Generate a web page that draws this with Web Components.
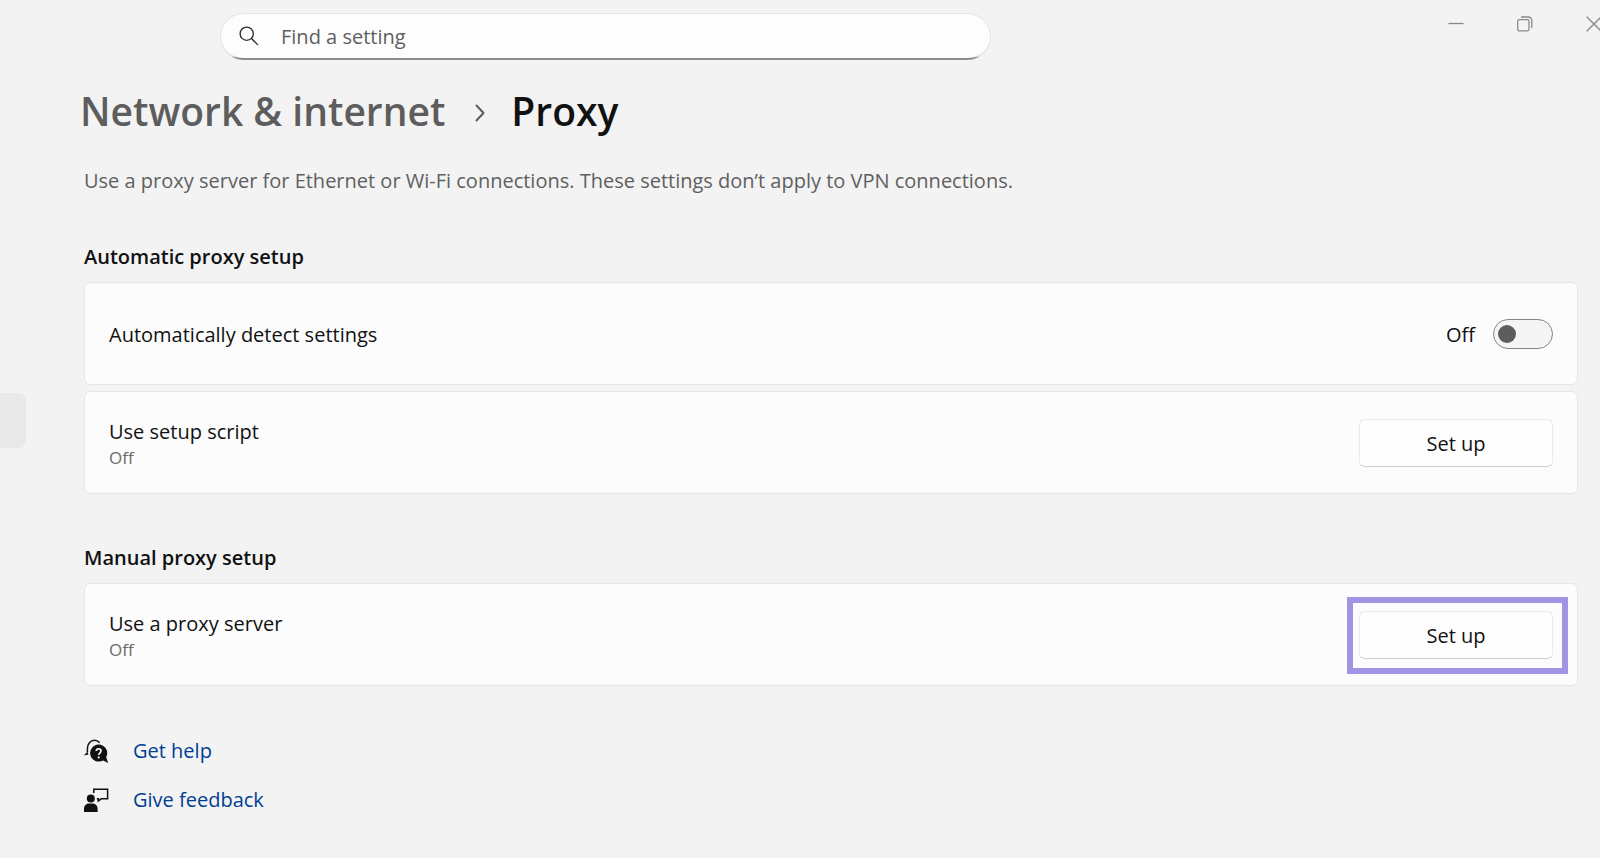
<!DOCTYPE html>
<html lang="en">
<head>
<meta charset="UTF-8">
<meta name="viewport" content="width=device-width, initial-scale=1.0">
<title>Settings - Proxy</title>
<style>
    body {
        margin: 0;
        background: #f3f3f3;
        color: #111;
        font-family: 'Segoe UI', 'Open Sans', 'Noto Sans', sans-serif;
        font-size: 20px;
        line-height: 28px;
    }
</style>
</head>
<body>
<settings-window>
    <setting-search slot="search" placeholder="Find a setting"></setting-search>
    <window-controls slot="controls"></window-controls>
    <nav-strip slot="nav"></nav-strip>

    <page-title parent="Network &amp; internet" current="Proxy"></page-title>
    <page-note>Use a proxy server for Ethernet or Wi-Fi connections. These settings don’t apply to VPN connections.</page-note>

    <setting-group heading="Automatic proxy setup">
        <setting-card label="Automatically detect settings">
            <toggle-switch label="Automatically detect settings"></toggle-switch>
        </setting-card>
        <setting-card label="Use setup script" status="Off">
            <action-button>Set up</action-button>
        </setting-card>
    </setting-group>

    <setting-group heading="Manual proxy setup">
        <setting-card label="Use a proxy server" status="Off">
            <action-button highlight>Set up</action-button>
        </setting-card>
    </setting-group>

    <help-links>
        <help-link icon="help">Get help</help-link>
        <help-link icon="feedback">Give feedback</help-link>
    </help-links>
</settings-window>

<script>
// Base class: attaches an open shadow root and fills it from render()
class BaseElement extends HTMLElement {
    constructor() {
        super();
        this.attachShadow({ mode: 'open' }).innerHTML = this.render();
    }
}

// Window frame: title bar, cut-off navigation and page content
class SettingsWindow extends BaseElement {
    render() {
        return `
            <style>
                :host {
                    display: block;
                    min-height: 100vh;
                    overflow: hidden;
                }
                header {
                    display: flex;
                    justify-content: space-between;
                    align-items: flex-start;
                    height: 60px;
                    padding-left: 220px;
                }
                .body {
                    display: flex;
                }
                main {
                    flex: 1;
                    min-width: 0;
                    padding: 21px 22px 32px 58px;
                }
            </style>
            <header>
                <slot name="search"></slot>
                <slot name="controls"></slot>
            </header>
            <div class="body">
                <slot name="nav"></slot>
                <main><slot></slot></main>
            </div>
        `;
    }
}

// Search box
class SettingSearch extends BaseElement {
    render() {
        const placeholder = this.getAttribute('placeholder') || '';
        return `
            <style>
                :host {
                    display: block;
                    flex: 0 1 771px;
                    margin-top: 13px;
                }
                label {
                    display: flex;
                    align-items: center;
                    box-sizing: border-box;
                    height: 47px;
                    padding: 0 18px;
                    gap: 22px;
                    border: 1px solid transparent;
                    border-bottom-width: 2px;
                    border-radius: 24px;
                    background:
                        linear-gradient(#fdfdfd, #fdfdfd) padding-box,
                        linear-gradient(to top, #8c8c8c 2px, #e5e5e5 4px) border-box;
                }
                svg {
                    flex-shrink: 0;
                }
                input {
                    flex: 1;
                    min-width: 0;
                    padding: 2px 0 0;
                    border: none;
                    outline: none;
                    background: none;
                    font: inherit;
                    color: inherit;
                }
                input::placeholder {
                    color: #606060;
                    opacity: 1;
                }
            </style>
            <label>
                <svg width="20" height="20" viewBox="0 0 20 20" fill="none" stroke="#2b2b2b" stroke-width="1.3" stroke-linecap="round"><circle cx="7.7" cy="7.7" r="6.6"/><path d="M12.5 12.5L18.6 18.6"/></svg>
                <input type="text" aria-label="${placeholder}" placeholder="${placeholder}">
            </label>
        `;
    }
}

// Minimize, restore, close
class WindowControls extends BaseElement {
    render() {
        return `
            <style>
                :host {
                    display: flex;
                    margin-right: -28px;
                }
                button {
                    display: flex;
                    justify-content: center;
                    align-items: center;
                    width: 69px;
                    height: 48px;
                    padding: 0;
                    border: none;
                    background: none;
                    color: #8a8a8a;
                }
            </style>
            <button aria-label="Minimize"><svg width="16" height="16" viewBox="0 0 16 16" fill="none" stroke="currentColor" stroke-width="1.3"><path d="M.5 7.5h15"/></svg></button>
            <button aria-label="Restore"><svg width="16" height="16" viewBox="0 0 16 16" fill="none" stroke="currentColor" stroke-width="1.3"><rect x=".7" y="3.6" width="11.3" height="11.3" rx="1.6"/><path d="M4 1h7.200a3.600 3.600 0 0 1 3.600 3.600v7.400"/></svg></button>
            <button aria-label="Close"><svg width="16" height="16" viewBox="0 0 16 16" fill="none" stroke="currentColor" stroke-width="1.3"><path d="M.7.7l14.600 14.600M15.300.7L.7 15.300"/></svg></button>
        `;
    }
}

// Right edge of the navigation pane with the selected entry
class NavStrip extends BaseElement {
    render() {
        return `
            <style>
                :host {
                    display: block;
                    flex: 0 0 26px;
                    padding-top: 333px;
                }
                div {
                    height: 55px;
                    background: #e9e9e9;
                    border-radius: 0 7px 7px 0;
                }
            </style>
            <div></div>
        `;
    }
}

// Breadcrumb title
class PageTitle extends BaseElement {
    render() {
        return `
            <style>
                :host {
                    display: block;
                    margin-left: -4px;
                }
                h1 {
                    display: flex;
                    align-items: center;
                    gap: 26px;
                    margin: 0;
                    font-size: 39px;
                    font-weight: 600;
                    line-height: 60px;
                }
                a {
                    color: #5d5d5d;
                    text-decoration: none;
                }
                svg {
                    margin: 4px 0 0 4px;
                }
            </style>
            <h1>
                <a href="#">${this.getAttribute('parent').replace('&', '&amp;')}</a>
                <svg width="10" height="18" viewBox="0 0 10 18" fill="none" stroke="#5d5d5d" stroke-width="2" stroke-linecap="round" stroke-linejoin="round"><path d="M1.5 1.5L8.5 9L1.5 16.5"/></svg>
                <span>${this.getAttribute('current')}</span>
            </h1>
        `;
    }
}

// Description under the title
class PageNote extends BaseElement {
    render() {
        return `
            <style>
                :host {
                    display: block;
                    margin: 26px 0 48px;
                    color: #606060;
                }
            </style>
            <slot></slot>
        `;
    }
}

// Heading with a stack of cards
class SettingGroup extends BaseElement {
    render() {
        return `
            <style>
                :host {
                    display: block;
                    margin-bottom: 50px;
                }
                h2 {
                    margin: 0 0 11px;
                    font-size: 20px;
                    font-weight: 600;
                    line-height: 28px;
                }
                .cards {
                    display: flex;
                    flex-direction: column;
                    gap: 6px;
                }
            </style>
            <section>
                <h2>${this.getAttribute('heading')}</h2>
                <div class="cards"><slot></slot></div>
            </section>
        `;
    }
}

// One row: label and status on the left, control on the right
class SettingCard extends BaseElement {
    render() {
        const status = this.getAttribute('status');
        return `
            <style>
                :host {
                    display: flex;
                    justify-content: space-between;
                    align-items: center;
                    box-sizing: border-box;
                    min-height: 103px;
                    padding: 0 24px;
                    background: #fcfcfc;
                    border: 1px solid #e6e6e6;
                    border-radius: 6px;
                }
                .text {
                    padding-top: 3px;
                }
                .status {
                    font-size: 17px;
                    line-height: 24px;
                    color: #6b6b6b;
                }
            </style>
            <div class="text">
                <div>${this.getAttribute('label')}</div>
                ${status ? `<div class="status">${status}</div>` : ''}
            </div>
            <slot></slot>
        `;
    }
}

// On/off switch
class ToggleSwitch extends BaseElement {
    constructor() {
        super();
        const input = this.shadowRoot.querySelector('input');
        const state = this.shadowRoot.querySelector('span');
        input.addEventListener('change', () => {
            state.textContent = input.checked ? 'On' : 'Off';
        });
    }

    render() {
        return `
            <style>
                label {
                    display: flex;
                    align-items: center;
                    gap: 18px;
                }
                span {
                    padding-top: 3px;
                }
                input {
                    appearance: none;
                    display: flex;
                    align-items: center;
                    box-sizing: border-box;
                    width: 60px;
                    height: 30px;
                    margin: 0;
                    padding: 0 4px;
                    background: #f5f5f5;
                    border: 1px solid #858585;
                    border-radius: 15px;
                }
                input::before {
                    content: '';
                    width: 18px;
                    height: 18px;
                    border-radius: 50%;
                    background: #5d5d5d;
                }
                input:checked {
                    justify-content: flex-end;
                    background: #005fb8;
                    border-color: #005fb8;
                }
                input:checked::before {
                    background: #fff;
                }
            </style>
            <label>
                <span>Off</span>
                <input type="checkbox" role="switch" aria-label="${this.getAttribute('label')}">
            </label>
        `;
    }
}

// Standard button, with an optional frame around it
class ActionButton extends BaseElement {
    render() {
        return `
            <style>
                :host {
                    display: block;
                    position: relative;
                }
                button {
                    display: block;
                    box-sizing: border-box;
                    width: 194px;
                    height: 48px;
                    padding: 2px 0 0;
                    background: #fefefe;
                    border: 1px solid #e9e9e9;
                    border-bottom-color: #d0d0d0;
                    border-radius: 6px;
                    font: inherit;
                    color: inherit;
                }
                :host([highlight])::after {
                    content: '';
                    position: absolute;
                    inset: -14px -15px -15px -12px;
                    border: 6px solid #a294e4;
                    pointer-events: none;
                }
            </style>
            <button><slot></slot></button>
        `;
    }
}

// Links at the bottom of the page
class HelpLinks extends BaseElement {
    render() {
        return `
            <style>
                :host {
                    display: flex;
                    flex-direction: column;
                    align-items: flex-start;
                    gap: 21px;
                    margin-top: 51px;
                }
            </style>
            <slot></slot>
        `;
    }
}

const icons = {
    help: `<path d="M3.400 13V9.800C3.400 4.800 6.400 1.300 10.400 1.300C12.600 1.300 14.400 2.200 15.600 3.800" fill="none" stroke="#111" stroke-width="1.500"/>
        <path d="M3.400 12.500L0 16.400L4.400 15.600z" fill="#111"/>
        <path d="M14.600 5.600a8.500 8.500 0 1 0 4.400 15.800L24.200 24L22.200 18.200A8.500 8.500 0 0 0 14.600 5.600z" fill="#111"/>
        <path d="M12.200 12C12.400 9 17 9.200 17 11.900C17 13.800 14.700 13.800 14.700 16" fill="none" stroke="#f3f3f3" stroke-width="1.700"/>
        <circle cx="14.700" cy="18.400" r="1.100" fill="#f3f3f3"/>`,
    feedback: `<circle cx="6.800" cy="10.400" r="4" fill="#111"/>
        <path d="M0 24v-3.500a5 5 0 0 1 5-5h3.600a5 5 0 0 1 5 5V24z" fill="#111"/>
        <path d="M9.800 5V1.200h13.800v9.600H17.200L14.300 13V10.800H12.800" fill="none" stroke="#111" stroke-width="1.500"/>`
};

class HelpLink extends BaseElement {
    render() {
        return `
            <style>
                a {
                    display: flex;
                    align-items: center;
                    gap: 24px;
                    color: #003e92;
                    text-decoration: none;
                }
            </style>
            <a href="#">
                <svg width="25" height="25" viewBox="0 0 25 25">${icons[this.getAttribute('icon')]}</svg>
                <span><slot></slot></span>
            </a>
        `;
    }
}

customElements.define('settings-window', SettingsWindow);
customElements.define('setting-search', SettingSearch);
customElements.define('window-controls', WindowControls);
customElements.define('nav-strip', NavStrip);
customElements.define('page-title', PageTitle);
customElements.define('page-note', PageNote);
customElements.define('setting-group', SettingGroup);
customElements.define('setting-card', SettingCard);
customElements.define('toggle-switch', ToggleSwitch);
customElements.define('action-button', ActionButton);
customElements.define('help-links', HelpLinks);
customElements.define('help-link', HelpLink);
</script>
</body>
</html>
